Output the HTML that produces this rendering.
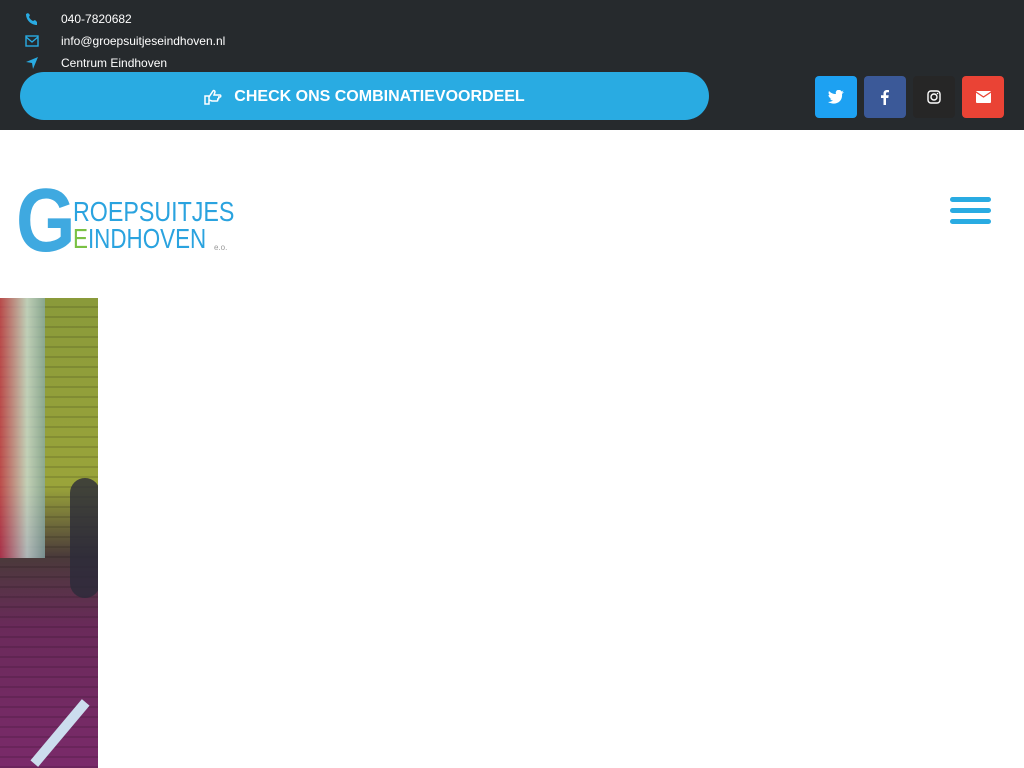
<!DOCTYPE html>
<html><head><meta charset="utf-8"><style>
*{margin:0;padding:0;box-sizing:border-box}
body{width:1024px;height:768px;overflow:hidden;background:#fff;font-family:"Liberation Sans",sans-serif;position:relative}
.top{position:absolute;left:0;top:0;width:1024px;height:130px;background:#262a2d}
.ci{position:absolute;left:61px;color:#fff;font-size:12px}
.ic{position:absolute;left:25px}
.btn{position:absolute;left:20px;top:72px;width:689px;height:48px;border-radius:24px;background:#29abe2;color:#fff;font-weight:bold;font-size:16px;display:flex;align-items:center;justify-content:center;gap:12px;padding-top:1px}
.soc{position:absolute;top:76px;width:42px;height:42px;border-radius:4px;display:flex;align-items:center;justify-content:center}
.hb{position:absolute;left:950px;width:41px;height:5px;border-radius:3px;background:#29abe2}
.img{position:absolute;left:0;top:298px;width:98px;height:470px;overflow:hidden;
background:repeating-linear-gradient(180deg,rgba(0,0,0,0) 0 8px,rgba(0,0,0,.12) 8px 10px),
linear-gradient(180deg,#8a9a3a 0,#9aa43a 40%,#4a3a3a 55%,#6a2a5a 70%,#7a2a6a 100%)}
.lt{position:absolute;left:73px;transform-origin:0 0;white-space:nowrap;color:#2aa3df}
</style></head><body>
<div class="top">
<svg class="ic" style="top:12px" width="14" height="14" viewBox="0 0 14 14"><path d="M12 10l-2-2-2 1C6 8 5 7 4 5l1-2-2-2L1 2c0 6 5 11 11 11z" fill="#29abe2"/></svg>
<div class="ci" style="top:12px">040-7820682</div>
<svg class="ic" style="top:35px" width="14" height="12" viewBox="0 0 14 12"><rect x="1" y="1" width="12" height="10" fill="none" stroke="#29abe2" stroke-width="1.4"/><path d="M1 2l6 5 6-5" fill="none" stroke="#29abe2" stroke-width="1.4"/></svg>
<div class="ci" style="top:34px">info@groepsuitjeseindhoven.nl</div>
<svg class="ic" style="top:56px" width="14" height="14" viewBox="0 0 14 14"><path d="M13 1L1 6l6 1 1 6z" fill="#29abe2"/></svg>
<div class="ci" style="top:56px">Centrum Eindhoven</div>
<div class="btn"><svg width="18" height="16" viewBox="0 0 18 16"><path d="M1 7h4v8H1zM5 8l4-6c1-1 2 0 2 1l-1 3h6c1 0 1 2 0 2h-2c1 0 1 2 0 2h-1c1 0 1 2 0 2H8l-3-1" fill="none" stroke="#fff" stroke-width="1.5"/></svg>CHECK ONS COMBINATIEVOORDEEL</div>
<div class="soc" style="left:815px;background:#1da1f2"><svg width="16" height="14" viewBox="0 0 16 14"><path d="M16 2l-2 .5 1.5-2-2 1A3 3 0 008 4C5 4 3 3 1 1c-1 2 0 4 1 4l-1.5 0c0 2 1.5 3 3 3.5l-1.5 0c.5 1.5 2 2 3 2-1.5 1-3 1.5-5 1.5 7 4 15 0 14-8z" fill="#fff"/></svg></div>
<div class="soc" style="left:864px;background:#3b5998"><svg width="8" height="15" viewBox="0 0 8 15"><path d="M5 15V8h2.3l.4-2.7H5V3.6c0-.8.3-1.3 1.4-1.3H8V.1C7.5 0 6.8 0 6 0 4 0 2.5 1.2 2.5 3.4v1.9H0V8h2.5v7z" fill="#fff"/></svg></div>
<div class="soc" style="left:913px;background:#262626"><svg width="14" height="14" viewBox="0 0 14 14"><rect x="1" y="1" width="12" height="12" rx="3" fill="none" stroke="#fff" stroke-width="1.4"/><circle cx="7" cy="7" r="3" fill="none" stroke="#fff" stroke-width="1.4"/><circle cx="10.5" cy="3.5" r=".8" fill="#fff"/></svg></div>
<div class="soc" style="left:962px;background:#ea4335"><svg width="15" height="12" viewBox="0 0 15 12"><rect x="0" y="0" width="15" height="12" rx="1" fill="#fff"/><path d="M0 1l7.5 5L15 1" fill="none" stroke="#ea4335" stroke-width="1.3"/></svg></div>
</div>
<div style="position:absolute;left:16px;top:176px;font-weight:bold;font-size:90px;line-height:90px;color:#3fa9e0;transform:scaleX(.85);transform-origin:0 0">G</div>
<div class="lt" style="top:198px;font-size:28px;line-height:28px;transform:scaleX(.83)">ROEPSUITJES</div>
<div class="lt" style="top:225px;font-size:28px;line-height:28px;transform:scaleX(.8)"><span style="color:#7ac143">E</span>INDHOVEN</div>
<div style="position:absolute;left:214px;top:243px;font-size:8px;color:#999">e.o.</div>
<div class="hb" style="top:197px"></div><div class="hb" style="top:208px"></div><div class="hb" style="top:219px"></div>
<div class="img">
<div style="position:absolute;left:0;top:0;width:45px;height:260px;background:linear-gradient(90deg,#c83050,#d0e0e0 60%,#8aa 100%);opacity:.75"></div>
<div style="position:absolute;left:70px;top:180px;width:30px;height:120px;background:#2a2a3a;border-radius:15px;opacity:.8"></div>
<div style="position:absolute;left:20px;top:430px;width:80px;height:10px;background:#cde;transform:rotate(-50deg)"></div>
</div>
</body></html>
